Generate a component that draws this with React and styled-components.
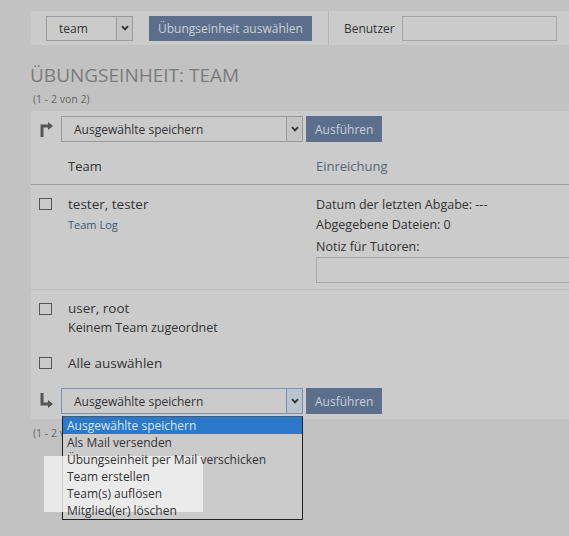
import React from 'react'
import styled, { createGlobalStyle } from 'styled-components'

const GlobalStyle = createGlobalStyle`
  html, body {
    margin: 0;
    background: #c2c2c2;
    overflow: hidden;
  }
  body {
    font-family: 'Open Sans', 'Liberation Sans', sans-serif;
    color: #333;
  }
`;

const Page = styled.div`
  position: relative;
  width: 620px;
  height: 536px;
  padding: 11px 0 0 31px;
  box-sizing: border-box;
`;

const TopBar = styled.div`
  display: flex;
  align-items: center;
  height: 34px;
  background: #cbcbcb;
  padding-left: 15px;
`;

const SelectBox = styled.div`
  position: relative;
  display: flex;
  align-items: center;
  width: ${p => p.width}px;
  height: ${p => p.height}px;
  box-sizing: border-box;
  border: 1px solid ${p => (p.focused ? '#7d91ad' : '#9a9a9a')};
  background: #cbcbcb;
  font-size: 12px;
  color: #333;
  padding-left: ${p => p.pad}px;
`;

const SelectText = styled.span`
  flex: 1;
`;

const ArrowBox = styled.span`
  display: flex;
  align-items: center;
  justify-content: center;
  width: 16px;
  height: 100%;
  box-sizing: border-box;
  border-left: 1px solid ${p => (p.focused ? '#7d91ad' : '#9a9a9a')};
  background: ${p => (p.focused ? '#bac4d1' : '#c4c4c4')};
`;

const Button = styled.button`
  height: ${p => p.height || 25}px;
  padding: 0 9px;
  border: none;
  background: #5b6f8c;
  color: #c9d0da;
  font-family: 'Open Sans', 'Liberation Sans', sans-serif;
  font-size: 12px;
  margin-left: ${p => p.ml || 0}px;
`;

const Divider = styled.span`
  width: 1px;
  align-self: stretch;
  margin: 0 15px 0 16px;
  background: #b5b5b5;
`;

const Label = styled.span`
  font-size: 12px;
  color: #333;
  margin-right: 7px;
`;

const TextInput = styled.div`
  width: 155px;
  height: 25px;
  box-sizing: border-box;
  border: 1px solid #a3a3a3;
  background: #cbcbcb;
`;

const Title = styled.h1`
  margin: 18px 0 0 -1px;
  font-size: 19px;
  line-height: 25px;
  font-weight: 400;
  color: #7b7b7b;
`;

const Pager = styled.div`
  margin: ${p => p.mt}px 0 0 2px;
  font-size: 10.5px;
  line-height: 14px;
  color: #666;
`;

const Panel = styled.div`
  margin-top: 5px;
  background: #cbcbcb;
  padding: 5px 0 5px;
`;

const ActionRow = styled.div`
  display: flex;
  align-items: center;
  padding-left: 9px;
  margin-top: ${p => p.mt || 0}px;
`;

const ActionIcon = styled.svg`
  width: 14px;
  height: 16px;
  margin-right: 7px;
`;

const Grid = styled.div`
  display: grid;
  grid-template-columns: 37px 248px 1fr;
  border-bottom: ${p => (p.border ? `1px solid ${p.border}` : 'none')};
  padding: ${p => p.pad};
`;

const HeadCell = styled.div`
  grid-column: ${p => p.col};
  font-size: 13px;
  line-height: 18px;
  color: ${p => p.color};
`;

const CheckCell = styled.div`
  padding: ${p => p.top}px 0 0 8px;
`;

const Checkbox = styled.span`
  display: block;
  width: 13px;
  height: 12px;
  box-sizing: border-box;
  border: 1px solid #555;
  background: #cbcbcb;
`;

const Name = styled.div`
  font-size: 13.5px;
  line-height: 18px;
  color: #333;
`;

const SmallLink = styled.div`
  margin-top: 4px;
  font-size: 11px;
  line-height: 16px;
  color: #3c5677;
`;

const Info = styled.div`
  font-size: 12.5px;
  line-height: 20px;
  color: #333;
  margin-top: ${p => p.mt || 0}px;
`;

const NoteArea = styled.div`
  height: 26px;
  width: 300px;
  box-sizing: border-box;
  border: 1px solid #a8a8a8;
  background: #cbcbcb;
`;

const SelectAll = styled.div`
  display: grid;
  grid-template-columns: 37px 1fr;
  align-items: center;
  margin-top: 16px;
`;

const DropList = styled.ul`
  position: absolute;
  left: 62px;
  top: 416px;
  width: 241px;
  height: 104px;
  box-sizing: border-box;
  margin: 0;
  padding: 0;
  list-style: none;
  border: 1px solid #222;
  border-top-color: #555;
  background: #cbcbcb;
`;

const Option = styled.li`
  position: relative;
  z-index: 3;
  height: 17px;
  line-height: 17px;
  padding-left: 4px;
  font-size: 12px;
  color: ${p => (p.active ? '#dde6f2' : '#333')};
  background: ${p => (p.active ? '#2a79cb' : 'transparent')};
`;

const Glare = styled.div`
  position: absolute;
  z-index: 2;
  left: 44px;
  top: 456px;
  width: 159px;
  height: 56px;
  background: rgba(242, 242, 242, 0.82);
`;

const Chevron = () => (
  <svg width="8" height="6" viewBox="0 0 8 6">
    <path d="M1 1.2 L4 4.4 L7 1.2" fill="none" stroke="#333" strokeWidth="1.8" />
  </svg>
);

const Select = ({ width, height = 25, pad, focused, children }) => (
  <SelectBox width={width} height={height} pad={pad} focused={focused}>
    <SelectText>{children}</SelectText>
    <ArrowBox focused={focused}>
      <Chevron />
    </ArrowBox>
  </SelectBox>
);

const options = [
  'Ausgewählte speichern',
  'Als Mail versenden',
  'Übungseinheit per Mail verschicken',
  'Team erstellen',
  'Team(s) auflösen',
  'Mitglied(er) löschen',
];

export default function App() {
  return (
    <>
      <GlobalStyle />
      <Page>
        <TopBar>
          <Select width={87} pad={12}>team</Select>
          <Button ml={16}>Übungseinheit auswählen</Button>
          <Divider />
          <Label>Benutzer</Label>
          <TextInput />
        </TopBar>

        <Title>ÜBUNGSEINHEIT: TEAM</Title>
        <Pager mt={4}>(1 - 2 von 2)</Pager>

        <Panel>
          <ActionRow>
            <ActionIcon viewBox="0 0 14 16">
              <path d="M2 16 V5 H8" fill="none" stroke="#555" strokeWidth="3" />
              <path d="M8 1 L13 5 L8 9 Z" fill="#555" />
            </ActionIcon>
            <Select width={242} height={26} pad={12}>Ausgewählte speichern</Select>
            <Button ml={3} height={26}>Ausführen</Button>
          </ActionRow>

          <Grid border="#9b9b9b" pad="15px 0 9px">
            <HeadCell col={2} color="#333">Team</HeadCell>
            <HeadCell col={3} color="#56667a">Einreichung</HeadCell>
          </Grid>

          <Grid border="#bababa" pad="10px 0 6px">
            <CheckCell top={3}><Checkbox /></CheckCell>
            <div>
              <Name>tester, tester</Name>
              <SmallLink>Team Log</SmallLink>
            </div>
            <div>
              <Info>Datum der letzten Abgabe: ---</Info>
              <Info>Abgegebene Dateien: 0</Info>
              <Info mt={2}>Notiz für Tutoren:</Info>
              <NoteArea />
            </div>
          </Grid>

          <Grid pad="9px 0 0">
            <CheckCell top={4}><Checkbox /></CheckCell>
            <div>
              <Name>user, root</Name>
              <Info mt={1}>Keinem Team zugeordnet</Info>
            </div>
          </Grid>

          <SelectAll>
            <CheckCell top={0}><Checkbox /></CheckCell>
            <Name>Alle auswählen</Name>
          </SelectAll>

          <ActionRow mt={16}>
            <ActionIcon viewBox="0 0 14 16">
              <path d="M2 0 V11 H8" fill="none" stroke="#555" strokeWidth="3" />
              <path d="M8 7 L13 11 L8 15 Z" fill="#555" />
            </ActionIcon>
            <Select width={242} height={26} pad={12} focused>Ausgewählte speichern</Select>
            <Button ml={3} height={26}>Ausführen</Button>
          </ActionRow>
        </Panel>

        <Pager mt={7}>(1 - 2 von 2)</Pager>

        <DropList>
          {options.map((o, i) => (
            <Option key={o} active={i === 0}>{o}</Option>
          ))}
        </DropList>
        <Glare />
      </Page>
    </>
  )
}
